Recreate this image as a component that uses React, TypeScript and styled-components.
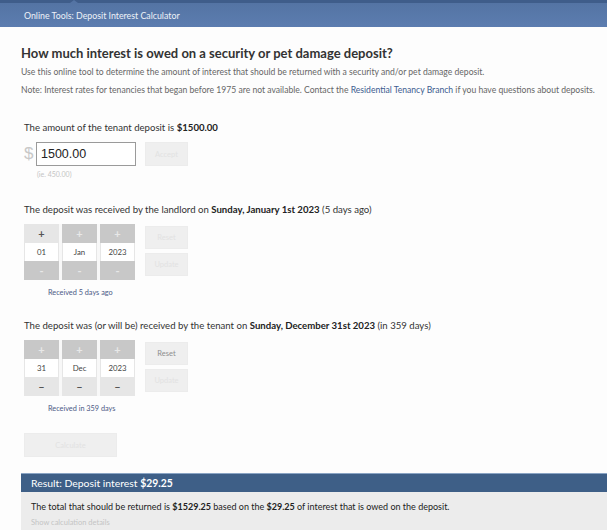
import React from 'react';
import styled, { createGlobalStyle } from 'styled-components';

const GlobalStyle = createGlobalStyle`
    html, body {
        margin: 0;
        padding: 0;
        background: #fdfdfd;
        font-family: Lato, "Open Sans", sans-serif;
        color: #333;
        overflow: hidden;
    }
`;

const Page = styled.div`
    width: 607px;
    height: 530px;
    overflow: hidden;
`;

const TopBar = styled.div`
    position: relative;
    height: 27px;
    border-top: 3px solid #3f5d8a;
    box-sizing: border-box;
    background: linear-gradient(#5474a4, #5c7db0);
    color: #eef2f8;
    font-size: 8.8px;
    padding-left: 24px;
    display: flex;
    align-items: center;

    &::before {
        content: '';
        position: absolute;
        top: -3px;
        left: 70px;
        border-left: 4px solid transparent;
        border-right: 4px solid transparent;
        border-bottom: 3px solid #5474a4;
    }
`;

const Content = styled.div`
    padding: 19px 0 0 21px;
`;

const Title = styled.h1`
    margin: 0 0 7px;
    font-size: 13px;
    font-weight: 700;
    color: #333;
    line-height: 14px;
`;

const Intro = styled.p`
    margin: 0 0 8px;
    font-size: 8.6px;
    line-height: 10px;
    color: #666;

    a {
        color: #3b5b8f;
        text-decoration: none;
    }
`;

const Section = styled.div`
    padding-left: 3px;
`;

const Label = styled.div`
    font-size: 9.6px;
    line-height: 12px;
    color: #333;
    margin: ${p => p.$top || 0}px 0 8px;

    b {
        font-weight: 700;
        color: #222;
    }
`;

const AmountRow = styled.div`
    display: flex;
    align-items: center;
    gap: 3px;
    margin-top: 3px;
`;

const Dollar = styled.span`
    font-size: 17px;
    color: #c8c8c8;
    width: 9px;
    font-family: "Liberation Sans", Arial, sans-serif;
`;

const AmountInput = styled.div`
    width: 100px;
    height: 24px;
    border: 1px solid #9a9a9a;
    background: #fff;
    font-family: "Liberation Sans", Arial, sans-serif;
    font-size: 12.5px;
    color: #222;
    display: flex;
    align-items: center;
    padding-left: 4px;
    box-sizing: border-box;
`;

const GhostButton = styled.div`
    width: ${p => p.$w || 43}px;
    height: ${p => p.$h || 23}px;
    background: #efefef;
    border: 1px solid #ececec;
    box-sizing: border-box;
    display: flex;
    align-items: center;
    justify-content: center;
    font-size: 7.5px;
    color: ${p => (p.$dim ? '#e2e2e2' : '#8e8e8e')};
    margin-left: ${p => p.$ml || 0}px;
`;

const Hint = styled.div`
    font-size: 7px;
    line-height: 9px;
    color: #c4c4c4;
    margin: 4px 0 0 13px;
`;

const DateRow = styled.div`
    display: flex;
    gap: 10px;
`;

const Spinner = styled.div`
    display: grid;
    grid-template-columns: repeat(3, 35px);
    column-gap: 3px;
    background: #f8f8f8;
`;

const SpinCol = styled.div`
    display: flex;
    flex-direction: column;
`;

const SpinBtn = styled.div`
    height: 19px;
    background: ${p => (p.$active ? '#e6e6e6' : '#c8c8c8')};
    color: ${p => (p.$active ? '#555' : '#e8e8e8')};
    display: flex;
    align-items: center;
    justify-content: center;
    font-size: 11px;
    font-weight: 700;
    line-height: 1;
`;

const SpinValue = styled.div`
    height: 18px;
    background: #fff;
    border-left: 1px solid #e6e6e6;
    border-right: 1px solid #e6e6e6;
    box-sizing: border-box;
    display: flex;
    align-items: center;
    justify-content: center;
    font-size: 7.8px;
    color: #444;
`;

const SideButtons = styled.div`
    display: flex;
    flex-direction: column;
    gap: 4px;
    padding-top: 2px;
`;

const Note = styled.div`
    font-size: 7.3px;
    line-height: 9px;
    color: #4c5a86;
    margin: 8px 0 0 24px;
`;

const CalcWrap = styled.div`
    margin-top: 20px;
`;

const ResultBar = styled.div`
    margin-top: 16px;
    background: #3e5f87;
    border-top: 1px solid #8aa4c4;
    height: 19px;
    box-sizing: border-box;
    color: #fff;
    font-size: 10.4px;
    display: flex;
    align-items: center;
    padding-left: 10px;

    b {
        font-weight: 700;
    }
`;

const ResultBody = styled.div`
    background: #ececec;
    padding: 9px 10px 10px;
    height: 60px;
    font-size: 9px;
    line-height: 11px;
    color: #222;

    b {
        font-weight: 700;
    }
`;

const Details = styled.div`
    margin-top: 6px;
    color: #c4c4c4;
    font-size: 7.5px;
    line-height: 9px;
`;

type Part = { value: string; plusActive?: boolean; minusActive?: boolean; minus: string };

const DateSpinner = ({ parts, resetDim }: { parts: Part[]; resetDim: boolean }) => (
    <DateRow>
        <Spinner>
            {parts.map((part, i) => (
                <SpinCol key={i}>
                    <SpinBtn $active={part.plusActive}>+</SpinBtn>
                    <SpinValue>{part.value}</SpinValue>
                    <SpinBtn $active={part.minusActive}>{part.minus}</SpinBtn>
                </SpinCol>
            ))}
        </Spinner>
        <SideButtons>
            <GhostButton $dim={resetDim}>Reset</GhostButton>
            <GhostButton $dim>Update</GhostButton>
        </SideButtons>
    </DateRow>
);

export default function App() {
    const landlordParts: Part[] = [
        { value: '01', plusActive: true, minus: '-' },
        { value: 'Jan', minus: '-' },
        { value: '2023', minus: '-' },
    ];
    const tenantParts: Part[] = [
        { value: '31', minusActive: true, minus: '–' },
        { value: 'Dec', minusActive: true, minus: '–' },
        { value: '2023', minusActive: true, minus: '–' },
    ];

    return (
        <Page>
            <GlobalStyle />
            <TopBar>Online Tools: Deposit Interest Calculator</TopBar>
            <Content>
                <Title>How much interest is owed on a security or pet damage deposit?</Title>
                <Intro>
                    Use this online tool to determine the amount of interest that should be returned with a security and/or pet damage deposit.
                </Intro>
                <Intro>
                    Note: Interest rates for tenancies that began before 1975 are not available. Contact the{' '}
                    <a href="#">Residential Tenancy Branch</a> if you have questions about deposits.
                </Intro>

                <Section>
                    <Label $top={27}>
                        The amount of the tenant deposit is <b>$1500.00</b>
                    </Label>
                    <AmountRow>
                        <Dollar>$</Dollar>
                        <AmountInput>1500.00</AmountInput>
                        <GhostButton $dim $ml={6} $h={24}>Accept</GhostButton>
                    </AmountRow>
                    <Hint>(ie. 450.00)</Hint>

                    <Label $top={25}>
                        The deposit was received by the landlord on <b>Sunday, January 1st 2023</b> (5 days ago)
                    </Label>
                    <DateSpinner parts={landlordParts} resetDim />
                    <Note>Received 5 days ago</Note>

                    <Label $top={23}>
                        The deposit was (or will be) received by the tenant on <b>Sunday, December 31st 2023</b> (in 359 days)
                    </Label>
                    <DateSpinner parts={tenantParts} resetDim={false} />
                    <Note>Received in 359 days</Note>

                    <CalcWrap>
                        <GhostButton $dim $w={93} $h={24}>Calculate</GhostButton>
                    </CalcWrap>
                </Section>

                <ResultBar>
                    Result: Deposit interest&nbsp;<b>$29.25</b>
                </ResultBar>
                <ResultBody>
                    The total that should be returned is <b>$1529.25</b> based on the <b>$29.25</b> of interest that is owed on the deposit.
                    <Details>Show calculation details</Details>
                </ResultBody>
            </Content>
        </Page>
    );
}
